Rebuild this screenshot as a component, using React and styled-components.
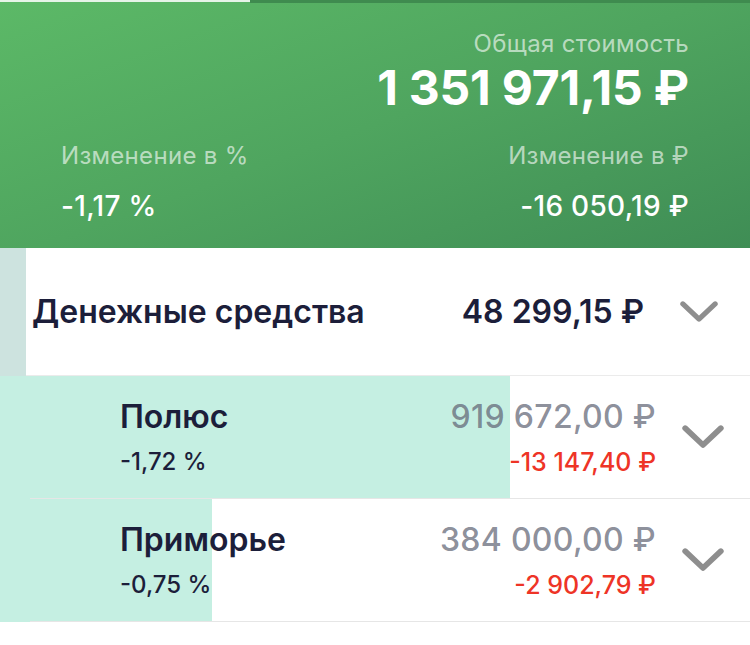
import React from "react"
import styled, { createGlobalStyle } from "styled-components"

const GlobalStyle = createGlobalStyle`
  html, body {
    margin: 0;
    padding: 0;
    background: #fff;
    font-family: Inter, "Noto Sans", "DejaVu Sans", sans-serif;
    -webkit-font-smoothing: antialiased;
  }
`

const rows = [
  { name: "Полюс", percent: "-1,72 %", amount: "919 672,00 ₽", change: "-13 147,40 ₽", share: 68 },
  { name: "Приморье", percent: "-0,75 %", amount: "384 000,00 ₽", change: "-2 902,79 ₽", share: 28.3 },
]

function Chevron({ size }) {
  return (
    <svg width={size} height={size * 0.55} viewBox="0 0 40 22" fill="none">
      <path d="M3 3 L20 19 L37 3" stroke="#8e8e8e" strokeWidth="5.4" strokeLinecap="round" strokeLinejoin="round" />
    </svg>
  )
}

export default function App() {
  return (
    <Page>
      <GlobalStyle />
      <Header>
        <TabLine>
          <ActiveTab />
          <RestTab />
        </TabLine>
        <Total>
          <Label>Общая стоимость</Label>
          <BigValue>1 351 971,15 ₽</BigValue>
        </Total>
        <Changes>
          <ChangeCol>
            <Label>Изменение в %</Label>
            <ChangeValue>-1,17 %</ChangeValue>
          </ChangeCol>
          <ChangeCol $right>
            <Label>Изменение в ₽</Label>
            <ChangeValue>-16 050,19 ₽</ChangeValue>
          </ChangeCol>
        </Changes>
      </Header>

      <Section>
        <SectionStrip />
        <SectionBody>
          <SectionTitle>Денежные средства</SectionTitle>
          <SectionAmount>48 299,15 ₽</SectionAmount>
          <ChevronBox $w={38} $gap={36}>
            <Chevron size={38} />
          </ChevronBox>
        </SectionBody>
      </Section>

      {rows.map((r) => (
        <Row key={r.name}>
          <Bar style={{ width: `${r.share}%` }} />
          <RowBody>
            <RowInfo>
              <RowName>{r.name}</RowName>
              <RowPercent>{r.percent}</RowPercent>
            </RowInfo>
            <RowNumbers>
              <RowAmount>{r.amount}</RowAmount>
              <RowChange>{r.change}</RowChange>
            </RowNumbers>
            <ChevronBox $w={42} $gap={26}>
              <Chevron size={42} />
            </ChevronBox>
          </RowBody>
        </Row>
      ))}
    </Page>
  )
}

const Page = styled.div`
  width: 750px;
  min-height: 645px;
  background: #fff;
`
const Header = styled.header`
  height: 248px;
  box-sizing: border-box;
  padding: 0 61px;
  display: flex;
  flex-direction: column;
  background: linear-gradient(160deg, #5cb967 0%, #4fa55f 50%, #3f8d55 100%);
  color: #fff;
`
const TabLine = styled.div`
  display: flex;
  margin: 0 -61px;
  height: 3px;
`
const ActiveTab = styled.div`
  width: 250px;
  height: 2px;
  background: rgba(255, 255, 255, 0.85);
`
const RestTab = styled.div`
  flex: 1;
  height: 3px;
  background: #3f8b4f;
`
const Total = styled.div`
  display: flex;
  flex-direction: column;
  align-items: flex-end;
  margin-top: 26px;
`
const Label = styled.div`
  font-size: 24px;
  line-height: 30px;
  letter-spacing: 0.3px;
  color: rgba(255, 255, 255, 0.62);
`
const BigValue = styled.div`
  font-size: 48px;
  line-height: 58px;
  font-weight: 700;
  letter-spacing: -0.2px;
`
const Changes = styled.div`
  display: flex;
  justify-content: space-between;
  margin-top: 24px;
`
const ChangeCol = styled.div`
  display: flex;
  flex-direction: column;
  align-items: ${(p) => (p.$right ? "flex-end" : "flex-start")};
  gap: 19px;
`
const ChangeValue = styled.div`
  font-size: 28px;
  line-height: 32px;
  font-weight: 500;
  letter-spacing: 0.3px;
`
const Section = styled.section`
  display: flex;
  height: 128px;
`
const SectionStrip = styled.div`
  width: 26px;
  background: #cde3df;
`
const SectionBody = styled.div`
  flex: 1;
  display: flex;
  align-items: center;
  padding: 0 32px 0 6px;
  border-bottom: 1px solid #ebebeb;
`
const SectionTitle = styled.div`
  flex: 1;
  font-size: 32px;
  font-weight: 600;
  color: #1c1e3a;
`
const SectionAmount = styled.div`
  font-size: 32px;
  font-weight: 600;
  color: #1c1e3a;
`
const ChevronBox = styled.div`
  width: ${(p) => p.$w}px;
  margin-left: ${(p) => p.$gap}px;
  display: flex;
  align-items: center;
`
const Row = styled.div`
  position: relative;
  height: 123px;
`
const Bar = styled.div`
  position: absolute;
  left: 0;
  top: 0;
  bottom: 0;
  background: #c5efe2;
`
const RowBody = styled.div`
  position: relative;
  height: 100%;
  box-sizing: border-box;
  margin-left: 30px;
  padding: 0 26px 0 90px;
  border-bottom: 1px solid #e6e6e6;
  display: flex;
  align-items: center;
`
const RowInfo = styled.div`
  flex: 1;
  display: flex;
  flex-direction: column;
  gap: 12px;
`
const RowName = styled.div`
  font-size: 32px;
  line-height: 38px;
  font-weight: 600;
  color: #1c1e3a;
`
const RowPercent = styled.div`
  font-size: 24px;
  line-height: 28px;
  font-weight: 500;
  color: #1c1e3a;
`
const RowNumbers = styled.div`
  display: flex;
  flex-direction: column;
  align-items: flex-end;
  gap: 12px;
`
const RowAmount = styled.div`
  font-size: 32px;
  line-height: 38px;
  font-weight: 500;
  letter-spacing: 0.3px;
  color: rgba(98, 102, 118, 0.74);
`
const RowChange = styled.div`
  font-size: 25px;
  line-height: 28px;
  font-weight: 500;
  color: #ee3426;
`
